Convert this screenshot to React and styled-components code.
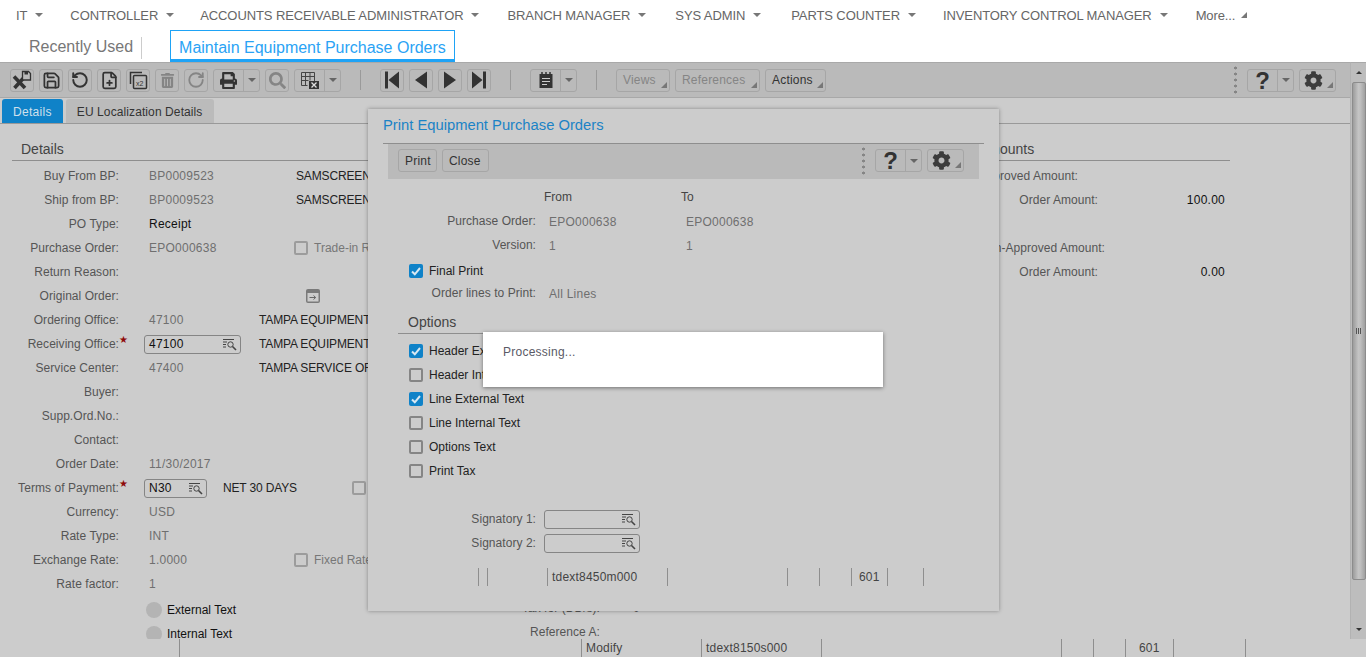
import React from 'react';
import styled, { createGlobalStyle } from 'styled-components';
import { FaCog, FaPrint, FaSearch, FaTrashAlt } from 'react-icons/fa';
import { RotateCcw, RotateCw, Save, FilePlus } from 'lucide-react';

const GlobalStyle = createGlobalStyle`
    html, body {
        margin: 0;
        height: 657px;
        overflow: hidden;
        background: #ccc;
    }
    body, button {
        font-family: "Liberation Sans", Arial, sans-serif;
        font-size: 12px;
    }
`;

const Page = styled.div`
    position: relative;
    width: 1366px;
    height: 657px;
    overflow: hidden;
    display: flex;
    flex-direction: column;
`;

const Header = styled.header`
    height: 62px;
    background: white;
    flex: none;
`;

const NavRow = styled.nav`
    display: flex;
    height: 30px;
    padding-left: 16px;
    align-items: center;
    color: #666;
    font-size: 13px;
`;

const NavItem = styled.div`
    display: flex;
    align-items: center;
    white-space: nowrap;
    letter-spacing: -0.1px;
    margin-right: ${p => p.$gap}px;

    i {
        margin-left: 8px;
        width: 0;
        height: 0;
        border: 4px solid transparent;
        border-top-color: #777;
        border-bottom: 0;
    }

    b {
        margin-left: 6px;
        width: 0;
        height: 0;
        border-left: 6px solid transparent;
        border-bottom: 6px solid #777;
    }
`;

const RecentRow = styled.div`
    display: flex;
    align-items: flex-start;
    height: 32px;
    padding-left: 29px;
    font-size: 16px;
`;

const Recent = styled.div`
    color: #777;
    padding-right: 8px;
    margin: 7px 28px 0 0;
    height: 22px;
    line-height: 20px;
    border-right: 1px solid #ccc;
`;

const ActiveTab = styled.div`
    box-sizing: border-box;
    height: 32px;
    line-height: 33px;
    padding: 0 8px;
    color: #2aa3f5;
    border: 1px solid #1ea3f6;
    border-bottom-width: 3px;
`;

const Main = styled.div`
    display: flex;
    height: 577px;
    flex: none;
`;

const Workspace = styled.div`
    width: 1350px;
    display: flex;
    flex-direction: column;
`;

const Toolbar = styled.div`
    box-sizing: border-box;
    height: 36px;
    flex: none;
    display: flex;
    align-items: center;
    gap: 5px;
    padding: 0 14px 0 10px;
    background: #bababa;
    border-top: 1px solid #a9a9a9;
    border-bottom: 1px solid #a8a8a8;
`;

const ToolBtn = styled.button`
    box-sizing: border-box;
    position: relative;
    width: ${p => p.$w || 24}px;
    height: 23px;
    flex: none;
    padding: 0;
    display: flex;
    align-items: center;
    justify-content: center;
    background: transparent;
    border: 1px solid #a6a6a6;
    border-radius: 3px;
    color: ${p => p.$off ? '#858585' : '#333'};
    font-size: 12px;
`;

const Split = styled.div`
    display: flex;
    flex: none;
    box-sizing: border-box;
    height: 23px;
    border: 1px solid #a6a6a6;
    border-radius: 3px;
`;

const SplitMain = styled.div`
    width: 29px;
    display: flex;
    align-items: center;
    justify-content: center;
    color: #333;
    border-right: 1px solid #a6a6a6;
`;

const SplitCaret = styled.div`
    width: 15px;
    display: flex;
    align-items: center;
    justify-content: center;

    &::after {
        content: '';
        border: 4px solid transparent;
        border-top-color: #666;
        border-bottom: 0;
    }
`;

const Corner = styled.span`
    position: absolute;
    right: 2px;
    bottom: 3px;
    width: 0;
    height: 0;
    border-left: 6px solid transparent;
    border-bottom: 6px solid #777;
`;

const TextBtn = styled(ToolBtn)`
    justify-content: flex-start;
    padding-left: ${p => p.$pad || 6}px;
    letter-spacing: 0.2px;
`;

const Sep = styled.div`
    width: 1px;
    height: 20px;
    flex: none;
    background: #9a9a9a;
    margin: 0 14px;
`;

const Dots = styled.div`
    width: 3px;
    height: 30px;
    flex: none;
    margin-left: ${p => p.$ml || 0}px;
    margin-right: 5px;
    background-image: radial-gradient(circle, #858585 1.4px, transparent 1.6px);
    background-size: 3px 6px;
`;

const Help = styled.span`
    font-size: 24px;
    line-height: 21px;
    font-weight: bold;
    color: #333;
`;

const TabStrip = styled.div`
    box-sizing: border-box;
    height: 26px;
    flex: none;
    display: flex;
    align-items: flex-end;
    gap: 3px;
    padding-left: 2px;
    border-bottom: 1px solid #999;
`;

const Tab = styled.div`
    height: 24px;
    line-height: 26px;
    padding: ${p => p.$active ? '0 11px' : '0 12px 0 11px'};
    border-radius: 3px 3px 0 0;
    letter-spacing: ${p => p.$active ? 0.3 : 0.1}px;
    background: ${p => p.$active ? '#0f82c8' : '#bbb'};
    color: ${p => p.$active ? '#cfe0ec' : '#333'};
`;

const Body = styled.div`
    flex: 1;
    display: flex;
    overflow: hidden;
    padding: 13px 0 0 12px;
`;

const LeftCol = styled.div`
    width: 640px;
    flex: none;
    margin-left: -12px;
`;

const RightCol = styled.div`
    width: 590px;
    flex: none;
`;

const Heading = styled.h3`
    box-sizing: border-box;
    margin: 0 0 3px ${p => p.$ml || 0}px;
    height: 24px;
    line-height: 24px;
    padding-left: ${p => p.$pl || 0}px;
    font-size: 14px;
    font-weight: normal;
    color: #444;
    border-bottom: 1px solid #8e8e8e;
`;

const Row = styled.div`
    display: flex;
    align-items: center;
    height: 24px;
    margin-top: ${p => p.$mt || 0}px;
    white-space: nowrap;
`;

const Label = styled.div`
    position: relative;
    width: ${p => p.$w || 119}px;
    flex: none;
    text-align: right;
    color: #555;
    letter-spacing: 0.05px;
`;

const Star = styled.span`
    position: absolute;
    left: 100%;
    top: -3px;
    font-size: 10px;
    color: #8f0a0a;
`;

const Val = styled.div`
    width: ${p => p.$w || 147}px;
    flex: none;
    margin-left: ${p => p.$ml ?? 30}px;
    color: ${p => p.$dark ? '#111' : '#6f6f6f'};
    letter-spacing: 0.25px;
`;

const Desc = styled.div`
    color: #222;
    letter-spacing: -0.15px;
`;

const Lookup = styled.div`
    box-sizing: border-box;
    width: ${p => p.$w}px;
    height: 19px;
    flex: none;
    margin: ${p => p.$m || '0'};
    display: flex;
    align-items: center;
    justify-content: space-between;
    padding: 0 3px 0 4px;
    border: 1px solid #858585;
    border-radius: 3px;
    color: #111;
    letter-spacing: 0.25px;
`;

const Box = styled.span`
    box-sizing: border-box;
    width: 14px;
    height: 14px;
    flex: none;
    margin-left: ${p => p.$ml || 0}px;
    display: flex;
    align-items: center;
    justify-content: center;
    border-radius: 2px;
    border: ${p => p.$on ? '0' : `2px solid ${p.$light ? '#9c9c9c' : '#858585'}`};
    background: ${p => p.$on ? '#0f82c8' : 'transparent'};
`;

const BoxText = styled.span`
    margin-left: 6px;
    color: ${p => p.$light ? '#777' : '#222'};
`;

const Radio = styled.span`
    width: 16px;
    height: 16px;
    margin: 4px 0 0 146px;
    flex: none;
    border-radius: 50%;
    background: #b4b4b4;
`;

const RadioText = styled.span`
    margin: 4px 0 0 5px;
    color: #111;
`;

const SubLabel = styled.div`
    margin-left: auto;
    color: #555;
    letter-spacing: 0.05px;
`;

const SubVal = styled.div`
    width: 40px;
    flex: none;
    padding-left: 33px;
    box-sizing: border-box;
    color: #555;
`;

const Amount = styled.div`
    flex: 1;
    text-align: right;
    padding-right: 5px;
    color: #111;
    letter-spacing: 0.25px;
`;

const GoIcon = styled.span`
    margin-left: 187px;
    display: flex;
    color: #777;
`;

const Grid = styled.div`
    display: flex;
    height: 18px;
    margin-left: ${p => p.$ml || 0}px;
    margin-top: ${p => p.$mt || 0}px;
    flex: none;
    color: #444;
`;

const Cell = styled.div`
    box-sizing: border-box;
    width: ${p => p.$w}px;
    border-left: 1px solid #8e8e8e;
    padding-left: ${p => p.$pad || 4}px;
    line-height: 19px;
    letter-spacing: 0.2px;
    white-space: nowrap;
`;

const Scrollbar = styled.div`
    box-sizing: border-box;
    width: 16px;
    display: flex;
    flex-direction: column;
    align-items: center;
    background: #bdbdbd;
    border-left: 1px solid #b2b2b2;
    border-top: 1px solid #a9a9a9;
`;

const ScrollArrow = styled.div`
    height: 19px;
    flex: none;
    display: flex;
    align-items: center;
    justify-content: center;

    &::after {
        content: '';
        border: 3.5px solid transparent;
        ${p => p.$down ? 'border-top-color: #333; border-bottom: 0;' : 'border-bottom-color: #333; border-top: 0;'}
    }
`;

const Thumb = styled.div`
    box-sizing: border-box;
    width: 14px;
    height: 498px;
    flex: none;
    display: flex;
    align-items: center;
    justify-content: center;
    border: 1px solid #8c8c8c;
    border-radius: 2px;
    background: linear-gradient(to right, #9c9c9c, #c4c4c4 45%, #c0c0c0 60%, #a0a0a0);

    &::after {
        content: '';
        width: 5px;
        height: 6px;
        background: repeating-linear-gradient(to right, #555 0 1px, transparent 1px 2px);
    }
`;

const ScrollRest = styled.div`
    flex: 1;
`;

const Modal = styled.div`
    position: absolute;
    left: 368px;
    top: 109px;
    box-sizing: border-box;
    width: 631px;
    height: 502px;
    display: flex;
    flex-direction: column;
    background: #ccc;
    box-shadow: 0 0 4px rgba(0, 0, 0, 0.35);
`;

const ModalTitle = styled.div`
    box-sizing: border-box;
    height: 35px;
    margin: 0 15px;
    line-height: 33px;
    font-size: 14.75px;
    color: #1b83c6;
    border-bottom: 1px solid #8e8e8e;
`;

const ModalBar = styled.div`
    box-sizing: border-box;
    height: 35px;
    flex: none;
    margin: 0 20px;
    padding: 0 15px 2px 10px;
    display: flex;
    align-items: center;
    gap: 5px;
    background: #bababa;
`;

const ModalBody = styled.div`
    padding-top: 6px;
    display: flex;
    flex-direction: column;
`;

const FromTo = styled.div`
    display: flex;
    height: 24px;
    align-items: center;
    padding-left: 176px;
    color: #444;

    span:first-child {
        width: 137px;
    }
`;

const ModalVal = styled(Val)`
    width: 137px;
    margin-left: 13px;
    margin-top: 2px;
`;

const ToVal = styled(Val)`
    margin-left: 0;
    margin-top: 2px;
`;

const CheckRow = styled(Row)`
    padding-left: 41px;
`;

const OptionsHead = styled(Heading)`
    width: 440px;
    height: 30px;
    margin: -1px 0 5px 30px;
    line-height: 37px;
    padding-left: 10px;
`;

const Processing = styled.div`
    position: absolute;
    left: 483px;
    top: 332px;
    box-sizing: border-box;
    width: 400px;
    height: 55px;
    padding: 13px 20px;
    background: white;
    color: #5a5a66;
    letter-spacing: 0.25px;
    box-shadow: 0 1px 4px rgba(0, 0, 0, 0.45);
`;

// small list + magnifier glyph of the lookup fields
const LookupIcon = () => (
    <svg width="14" height="13" viewBox="0 0 14 13" fill="none" stroke="#444">
        <path d="M0 1.5h11M0 4h4M0 6.500h3M0 9h3" />
        <circle cx="7.500" cy="6.500" r="2.700" />
        <path d="M9.500 8.500l3.500 3.500" strokeWidth="1.600" />
    </svg>
);

const Check = () => (
    <svg width="12" height="12" viewBox="0 0 12 12" fill="none" stroke="#d8e8f2" strokeWidth="2">
        <path d="M2 6.500l2.800 2.800L10 3" />
    </svg>
);

const ExitIcon = () => (
    <svg width="20" height="20" viewBox="0 0 20 20" fill="none" stroke="#333">
        <path d="M2 6.500L13 18M2.500 18L12 7.500" strokeWidth="3.600" />
        <path d="M10.500 1.500h6l2 2v6.500h-8z" fill="#bababa" strokeWidth="1.300" />
        <path d="M12.500 2h3.500v2.500h-3.500z" fill="#333" stroke="none" />
    </svg>
);

const DoubleIcon = () => (
    <svg width="19" height="19" viewBox="0 0 19 19" fill="none" stroke="#333" strokeWidth="1.500">
        <path d="M1.500 13V1.500H13" />
        <rect x="4.500" y="4.500" width="13" height="13" rx="1" />
        <text x="7" y="15" fontSize="7" stroke="none" fill="#333" fontFamily="Liberation Sans">x2</text>
    </svg>
);

const TableXIcon = () => (
    <svg width="20" height="19" viewBox="0 0 20 19" fill="none" stroke="#444">
        <path d="M1.500 1.500h13v9M1.500 1.500v13h6M1.500 5.500h13M1.500 9.500h7M5.500 1.500v13M10 1.500v8" />
        <rect x="9" y="10" width="10" height="8" fill="#333" stroke="none" />
        <path d="M11.500 11.500l5 5M16.500 11.500l-5 5" stroke="#ddd" strokeWidth="1.300" />
    </svg>
);

const NavIcon = ({ d }) => (
    <svg width="16" height="18" viewBox="0 0 16 18" fill="#333"><path d={d} /></svg>
);

const NoteIcon = () => (
    <svg width="16" height="18" viewBox="0 0 16 18">
        <path d="M1.500 3h13v14h-13z" fill="#333" />
        <path d="M4 1v3M8 1v3M12 1v3" stroke="#333" strokeWidth="1.500" />
        <path d="M4 7.500h8M4 10.500h8M4 13.500h5" stroke="#ccc" strokeWidth="1.200" />
    </svg>
);

const GoOutIcon = () => (
    <svg width="14" height="14" viewBox="0 0 14 14">
        <rect x="0" y="0" width="14" height="14" rx="2" fill="#7a7a7a" />
        <rect x="1.500" y="4" width="11" height="8.500" fill="#ccc" />
        <path d="M3.500 8.500h6M7.500 6.500l2.200 2-2.200 2" stroke="#666" fill="none" />
    </svg>
);

const HelpGear = ({ left }) => (
    <>
        <Dots $ml={left} />
        <Split>
            <SplitMain><Help>?</Help></SplitMain>
            <SplitCaret />
        </Split>
        <ToolBtn $w={37}>
            <FaCog size={19} color="#3c3c3c" style={{ marginRight: 8 }} />
            <Corner />
        </ToolBtn>
    </>
);

const Field = ({ label, req, children }) => (
    <Row>
        <Label>{label}{req && <Star>★</Star>}</Label>
        {children}
    </Row>
);

const ModalField = ({ label, from, to }) => (
    <Row>
        <Label $w={168}>{label}</Label>
        <ModalVal>{from}</ModalVal>
        {to && <ToVal>{to}</ToVal>}
    </Row>
);

const Option = ({ on, mt, children }) => (
    <CheckRow $mt={mt}>
        <Box $on={on}>{on && <Check />}</Box>
        <BoxText>{children}</BoxText>
    </CheckRow>
);

const navItems = [
    ['IT', 27],
    ['CONTROLLER', 26],
    ['ACCOUNTS RECEIVABLE ADMINISTRATOR', 28],
    ['BRANCH MANAGER', 29],
    ['SYS ADMIN', 30],
    ['PARTS COUNTER', 27],
    ['INVENTORY CONTROL MANAGER', 28],
];

export default () => (
    <Page>
        <GlobalStyle />
        <Header>
            <NavRow>
                {navItems.map(([name, gap]) => <NavItem key={name} $gap={gap}>{name}<i /></NavItem>)}
                <NavItem>More...<b /></NavItem>
            </NavRow>
            <RecentRow>
                <Recent>Recently Used</Recent>
                <ActiveTab>Maintain Equipment Purchase Orders</ActiveTab>
            </RecentRow>
        </Header>

        <Main>
            <Workspace>
                <Toolbar>
                    <ToolBtn><ExitIcon /></ToolBtn>
                    <ToolBtn><Save size={19} strokeWidth={2.2} /></ToolBtn>
                    <ToolBtn><RotateCcw size={18} strokeWidth={2.6} /></ToolBtn>
                    <ToolBtn><FilePlus size={19} strokeWidth={2.2} /></ToolBtn>
                    <ToolBtn><DoubleIcon /></ToolBtn>
                    <ToolBtn $off><FaTrashAlt size={15} /></ToolBtn>
                    <ToolBtn $off><RotateCw size={18} strokeWidth={2.4} /></ToolBtn>
                    <Split>
                        <SplitMain><FaPrint size={17} /></SplitMain>
                        <SplitCaret />
                    </Split>
                    <ToolBtn $off><FaSearch size={17} /></ToolBtn>
                    <Split>
                        <SplitMain><TableXIcon /></SplitMain>
                        <SplitCaret />
                    </Split>
                    <Sep />
                    <ToolBtn><NavIcon d="M1 .5h3v17H1zM15 .5v17L4.500 9z" /></ToolBtn>
                    <ToolBtn><NavIcon d="M14 .5v17L2 9z" /></ToolBtn>
                    <ToolBtn><NavIcon d="M2 .5v17L14 9z" /></ToolBtn>
                    <ToolBtn><NavIcon d="M1 .5v17L11.500 9zM12 .5h3v17h-3z" /></ToolBtn>
                    <Sep />
                    <Split>
                        <SplitMain><NoteIcon /></SplitMain>
                        <SplitCaret />
                    </Split>
                    <Sep />
                    <TextBtn $w={54} $off>Views<Corner /></TextBtn>
                    <TextBtn $w={85} $off>References<Corner /></TextBtn>
                    <TextBtn $w={61}>Actions<Corner /></TextBtn>
                    <HelpGear left={403} />
                </Toolbar>

                <TabStrip>
                    <Tab $active>Details</Tab>
                    <Tab>EU Localization Details</Tab>
                </TabStrip>

                <Body>
                    <LeftCol>
                        <Heading $ml={12} $pl={9}>Details</Heading>
                        <Field label="Buy From BP:"><Val>BP0009523</Val><Desc>SAMSCREEN INC</Desc></Field>
                        <Field label="Ship from BP:"><Val>BP0009523</Val><Desc>SAMSCREEN INC</Desc></Field>
                        <Field label="PO Type:"><Val $dark>Receipt</Val></Field>
                        <Field label="Purchase Order:">
                            <Val>EPO000638</Val>
                            <Box $light $ml={-2} />
                            <BoxText $light>Trade-in Required</BoxText>
                        </Field>
                        <Field label="Return Reason:" />
                        <Field label="Original Order:"><GoIcon><GoOutIcon /></GoIcon></Field>
                        <Field label="Ordering Office:"><Val $w={110}>47100</Val><Desc>TAMPA EQUIPMENT</Desc></Field>
                        <Field label="Receiving Office:" req>
                            <Lookup $w={97} $m="0 18px 0 25px">47100<LookupIcon /></Lookup>
                            <Desc>TAMPA EQUIPMENT</Desc>
                        </Field>
                        <Field label="Service Center:"><Val $w={110}>47400</Val><Desc>TAMPA SERVICE OFFICE</Desc></Field>
                        <Field label="Buyer:" />
                        <Field label="Supp.Ord.No.:" />
                        <Field label="Contact:" />
                        <Field label="Order Date:"><Val>11/30/2017</Val></Field>
                        <Field label="Terms of Payment:" req>
                            <Lookup $w={63} $m="0 16px 0 25px">N30<LookupIcon /></Lookup>
                            <Desc>NET 30 DAYS</Desc>
                            <Box $light $ml={55} />
                        </Field>
                        <Field label="Currency:"><Val>USD</Val></Field>
                        <Field label="Rate Type:"><Val>INT</Val></Field>
                        <Field label="Exchange Rate:">
                            <Val>1.0000</Val>
                            <Box $light $ml={-2} />
                            <BoxText $light>Fixed Rate</BoxText>
                        </Field>
                        <Field label="Rate factor:"><Val>1</Val></Field>
                        <Row>
                            <Radio /><RadioText>External Text</RadioText>
                            <SubLabel>Tax for (DD/s):</SubLabel><SubVal>0</SubVal>
                        </Row>
                        <Row>
                            <Radio /><RadioText>Internal Text</RadioText>
                            <SubLabel>Reference A:</SubLabel><SubVal />
                        </Row>
                    </LeftCol>
                    <RightCol>
                        <Heading $pl={339}>Amounts</Heading>
                        <Row><Label $w={438}>Approved Amount:</Label></Row>
                        <Row><Label $w={458}>Order Amount:</Label><Amount>100.00</Amount></Row>
                        <Row />
                        <Row><Label $w={465}>Non-Approved Amount:</Label></Row>
                        <Row><Label $w={458}>Order Amount:</Label><Amount>0.00</Amount></Row>
                    </RightCol>
                </Body>
            </Workspace>
            <Scrollbar>
                <ScrollArrow />
                <Thumb />
                <ScrollRest />
                <ScrollArrow $down />
            </Scrollbar>
        </Main>

        <Grid $ml={179}>
            <Cell $w={402} />
            <Cell $w={120}>Modify</Cell>
            <Cell $w={120}>tdext8150s000</Cell>
            <Cell $w={240} />
            <Cell $w={32} />
            <Cell $w={32} />
            <Cell $w={48} $pad={13}>601</Cell>
            <Cell $w={72} />
            <Cell $w={1} />
        </Grid>

        <Modal>
            <ModalTitle>Print Equipment Purchase Orders</ModalTitle>
            <ModalBar>
                <TextBtn $w={39} $pad={6}>Print</TextBtn>
                <TextBtn $w={47}>Close</TextBtn>
                <HelpGear left={368} />
            </ModalBar>
            <ModalBody>
                <FromTo><span>From</span><span>To</span></FromTo>
                <ModalField label="Purchase Order:" from="EPO000638" to="EPO000638" />
                <ModalField label="Version:" from="1" to="1" />
                <Option on mt={2}>Final Print</Option>
                <Row $mt={-2}>
                    <Label $w={168}>Order lines to Print:</Label>
                    <ModalVal>All Lines</ModalVal>
                </Row>
                <OptionsHead as="div">Options</OptionsHead>
                <Option on>Header External Text</Option>
                <Option>Header Internal Text</Option>
                <Option on>Line External Text</Option>
                <Option>Line Internal Text</Option>
                <Option>Options Text</Option>
                <Option>Print Tax</Option>
                <Row $mt={24}>
                    <Label $w={168}>Signatory 1:</Label>
                    <Lookup $w={96} $m="0 0 0 8px"><span /><LookupIcon /></Lookup>
                </Row>
                <Row>
                    <Label $w={168}>Signatory 2:</Label>
                    <Lookup $w={96} $m="0 0 0 8px"><span /><LookupIcon /></Lookup>
                </Row>
                <Grid $ml={110} $mt={13}>
                    <Cell $w={9} />
                    <Cell $w={60} />
                    <Cell $w={120}>tdext8450m000</Cell>
                    <Cell $w={120} />
                    <Cell $w={32} />
                    <Cell $w={32} />
                    <Cell $w={36} $pad={7}>601</Cell>
                    <Cell $w={36} />
                    <Cell $w={1} />
                </Grid>
            </ModalBody>
        </Modal>
        <Processing>Processing...</Processing>
    </Page>
);
